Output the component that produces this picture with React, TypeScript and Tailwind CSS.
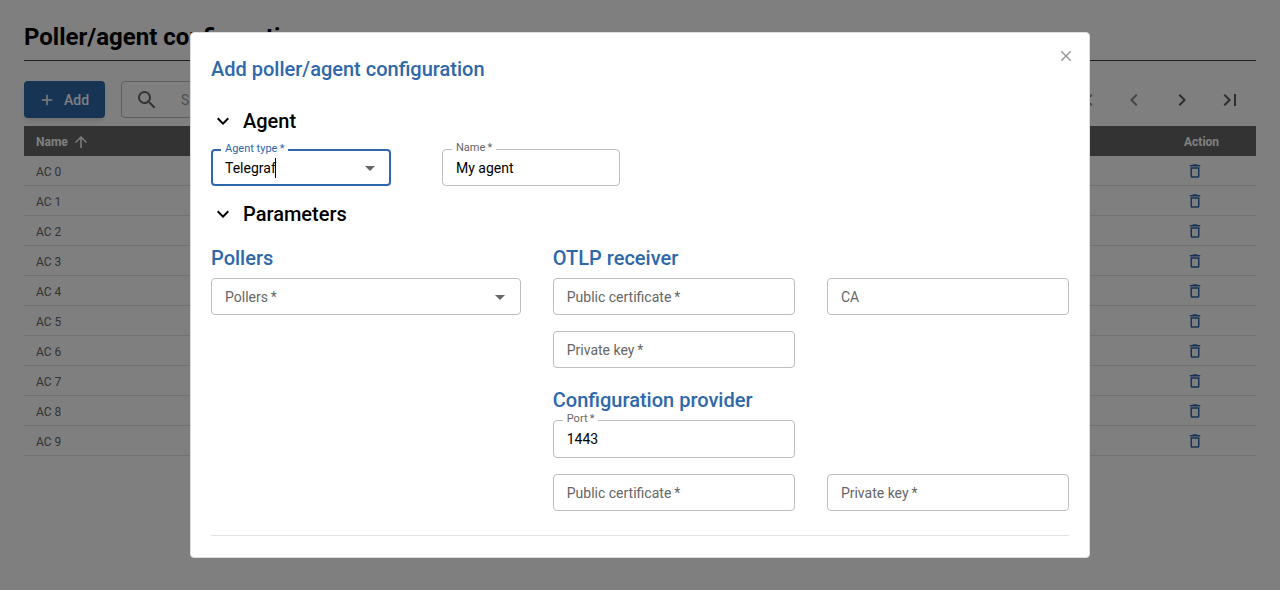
import { useId, useState } from "react";
import type { ReactNode } from "react";
import {
  MdAdd,
  MdArrowDropDown,
  MdArrowUpward,
  MdChevronLeft,
  MdChevronRight,
  MdClose,
  MdDeleteOutline,
  MdExpandMore,
  MdFirstPage,
  MdLastPage,
  MdSearch,
} from "react-icons/md";

const rows = ["AC 0", "AC 1", "AC 2", "AC 3", "AC 4", "AC 5", "AC 6", "AC 7", "AC 8", "AC 9"];

type FieldProps = {
  label: string;
  required?: boolean;
  initial?: string;
  active?: boolean;
  dropdown?: boolean;
  className?: string;
};

function Field({
  label,
  required = false,
  initial = "",
  active = false,
  dropdown = false,
  className = "h-[37px]",
}: FieldProps) {
  const id = useId();
  const [value, setValue] = useState(initial);
  const floating = value !== "";
  return (
    <div
      className={`relative flex items-center rounded bg-white ${
        active ? "border-2 border-[#2e68aa] px-3" : "border border-[#bdbdbd] px-[13px]"
      } ${className}`}
    >
      <label
        htmlFor={id}
        className={
          floating
            ? `absolute -top-2 bg-white px-1 text-[11px] leading-3 whitespace-nowrap ${
                active ? "left-2 text-[#2e68aa]" : "left-[9px] text-[#666666]"
              }`
            : "pointer-events-none absolute left-[13px] text-sm text-[#666666]"
        }
      >
        {label}
        {required && "\u2009*"}
      </label>
      <input
        id={id}
        role={dropdown ? "combobox" : undefined}
        aria-expanded={dropdown ? false : undefined}
        value={value}
        onChange={(e) => setValue(e.target.value)}
        className="w-full min-w-0 bg-transparent text-sm text-black outline-none"
      />
      {active && <span className="absolute left-[62px] h-5 w-px bg-black" />}
      {dropdown && (
        <MdArrowDropDown className={`absolute size-6 text-[#666666] ${active ? "right-[7px]" : "right-2"}`} />
      )}
    </div>
  );
}

function Section({ title }: { title: string }) {
  return (
    <h3>
      <button type="button" className="flex h-6 items-center gap-2 text-xl font-medium text-black">
        <MdExpandMore className="size-6" />
        {title}
      </button>
    </h3>
  );
}

function Heading({ children }: { children: ReactNode }) {
  return <h4 className="mb-2 text-xl leading-6 font-medium text-[#2e68aa]">{children}</h4>;
}

function PageButton({ label, disabled, children }: { label: string; disabled?: boolean; children: ReactNode }) {
  return (
    <button
      type="button"
      aria-label={label}
      disabled={disabled}
      className="flex w-12 justify-center text-2xl text-[#5c5c5c] disabled:text-[#8c8c8c]"
    >
      {children}
    </button>
  );
}

function Listing() {
  return (
    <main className="px-6 pt-[21px]">
      <h1 className="border-b border-[#444444] pb-[7px] text-2xl font-bold text-black">Poller/agent configuration</h1>
      <div className="mt-5 flex h-[37px] items-center">
        <button
          type="button"
          className="flex h-full items-center gap-2 rounded bg-[#2e68aa] pr-4 pl-[14px] text-sm font-medium text-white shadow-md"
        >
          <MdAdd className="size-[18px]" />
          Add
        </button>
        <div className="ml-4 flex h-full w-80 items-center gap-[22px] rounded border border-[#bdbdbd] px-[13px]">
          <MdSearch className="size-6 shrink-0 text-[#666666]" />
          <input
            aria-label="Search"
            placeholder="Search"
            className="w-full min-w-0 bg-transparent text-sm outline-none placeholder:text-[#a0a0a0]"
          />
        </div>
        <div className="ml-auto flex pr-0.5">
          <PageButton label="First page" disabled><MdFirstPage /></PageButton>
          <PageButton label="Previous page" disabled><MdChevronLeft /></PageButton>
          <PageButton label="Next page"><MdChevronRight /></PageButton>
          <PageButton label="Last page"><MdLastPage /></PageButton>
        </div>
      </div>
      <table className="mt-2 w-full border-separate border-spacing-0 text-left text-xs">
        <thead>
          <tr className="h-[30px] bg-[#666666] text-white">
            <th className="px-3 pt-px font-bold">
              <button type="button" className="flex items-center gap-1">
                Name
                <MdArrowUpward className="size-[18px]" />
              </button>
            </th>
            <th className="w-[84px] px-3 pt-px font-bold">Action</th>
          </tr>
        </thead>
        <tbody>
          {rows.map((name) => (
            <tr key={name} className="h-[30px] text-[#666666]">
              <td className="border-b border-[#e3e3e3] px-3 pt-0.5">{name}</td>
              <td className="border-b border-[#e3e3e3] px-3">
                <button type="button" aria-label={`Delete ${name}`} className="block px-0.5 text-lg text-[#2e68aa]">
                  <MdDeleteOutline />
                </button>
              </td>
            </tr>
          ))}
        </tbody>
      </table>
    </main>
  );
}

function AgentDialog() {
  return (
    <div className="fixed inset-0 flex items-center justify-center bg-black/50">
      <section
        role="dialog"
        aria-modal="true"
        aria-labelledby="dialog-title"
        className="relative w-full max-w-[900px] rounded border border-[#dddddd] bg-white px-5 pt-5 pb-[21px]"
      >
        <h2 id="dialog-title" className="text-xl leading-8 font-medium text-[#2e68aa]">
          Add poller/agent configuration
        </h2>
        <button type="button" aria-label="Close" className="absolute top-[14px] right-[14px] text-[#999999]">
          <MdClose className="size-[18px]" />
        </button>
        <form className="mt-6">
          <Section title="Agent" />
          <div className="mt-4 mb-4 flex gap-[51px]">
            <Field label="Agent type" required initial="Telegraf" active dropdown className="h-[37px] w-[180px]" />
            <Field label="Name" required initial="My agent" className="h-[37px] w-[178px]" />
          </div>
          <Section title="Parameters" />
          <div className="mt-5 grid grid-cols-[3fr_5fr] gap-8">
            <div>
              <Heading>Pollers</Heading>
              <Field label="Pollers" required dropdown />
            </div>
            <div>
              <Heading>OTLP receiver</Heading>
              <div className="mb-5 grid grid-cols-2 gap-x-8 gap-y-4">
                <Field label="Public certificate" required />
                <Field label="CA" />
                <Field label="Private key" required />
              </div>
              <Heading>Configuration provider</Heading>
              <div className="grid grid-cols-2 gap-x-8 gap-y-4">
                <Field label="Port" required initial="1443" className="h-[38px]" />
                <span />
                <Field label="Public certificate" required />
                <Field label="Private key" required />
              </div>
            </div>
          </div>
        </form>
        <hr className="mt-6 border-[#e3e3e3]" />
      </section>
    </div>
  );
}

export default function App() {
  return (
    <div className="min-h-screen bg-white font-[Roboto,sans-serif]">
      <Listing />
      <AgentDialog />
    </div>
  );
}
